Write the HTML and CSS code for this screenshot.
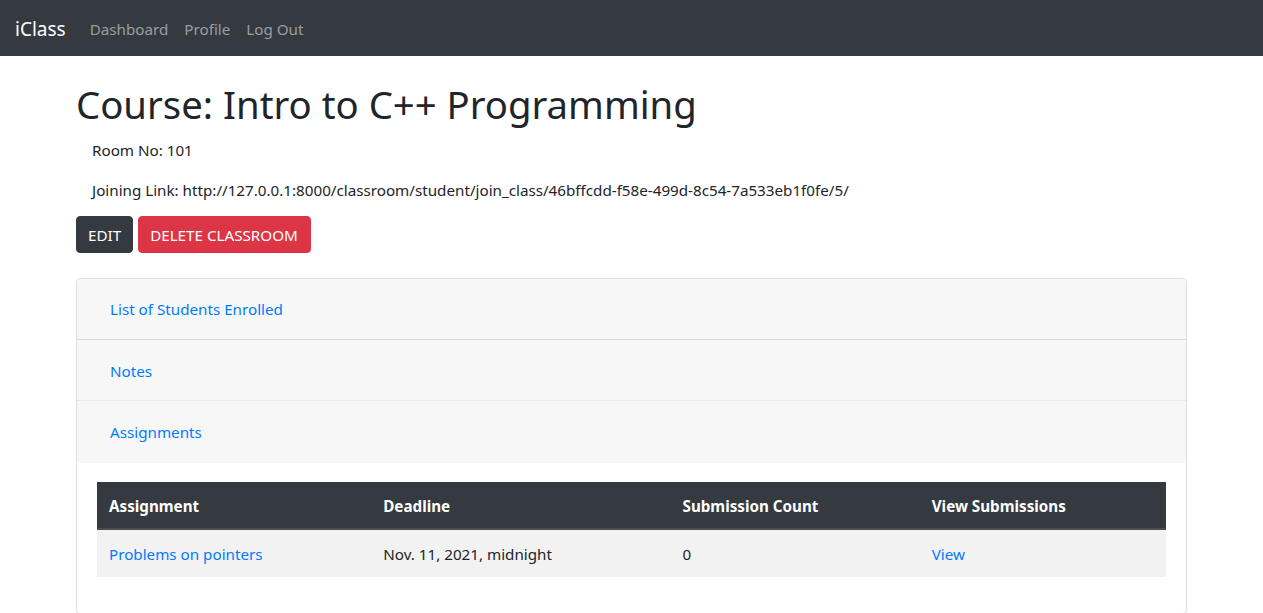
FILE: index.html
```html
<!DOCTYPE html>
<html lang="en">
<head>
<meta charset="utf-8">
<title>iClass</title>
<link rel="stylesheet" href="styles.css">
</head>
<body>
<nav class="navbar">
  <a class="brand" href="#">iClass</a>
  <ul class="nav-links">
    <li><a href="#">Dashboard</a></li>
    <li><a href="#">Profile</a></li>
    <li><a href="#">Log Out</a></li>
  </ul>
</nav>
<main class="container">
  <h1 class="title">Course: Intro to C++ Programming</h1>
  <div class="info">
    <p>Room No: 101</p>
    <p class="link-line">Joining Link: http://127.0.0.1:8000/classroom/student/join_class/46bffcdd-f58e-499d-8c54-7a533eb1f0fe/5/</p>
  </div>
  <div class="actions">
    <a class="btn btn-dark" href="#">EDIT</a>
    <a class="btn btn-danger" href="#">DELETE CLASSROOM</a>
  </div>
  <div class="accordion">
    <div class="card-header"><a class="btn-link" href="#">List of Students Enrolled</a></div>
    <div class="card-header"><a class="btn-link" href="#">Notes</a></div>
    <div class="card-header"><a class="btn-link" href="#">Assignments</a></div>
    <div class="card-body">
      <table class="table">
        <thead>
          <tr>
            <th class="col-a">Assignment</th>
            <th class="col-b">Deadline</th>
            <th class="col-c">Submission Count</th>
            <th class="col-d">View Submissions</th>
          </tr>
        </thead>
        <tbody>
          <tr>
            <td><a href="#">Problems on pointers</a></td>
            <td>Nov. 11, 2021, midnight</td>
            <td>0</td>
            <td><a href="#">View</a></td>
          </tr>
        </tbody>
      </table>
    </div>
  </div>
</main>
</body>
</html>
```
FILE: styles.css
```css
* { box-sizing: border-box; }
html, body { margin: 0; }
body {
  font-family: "Noto Sans", "Open Sans", sans-serif;
  font-size: 15.2px;
  line-height: 24px;
  color: #212529;
  background: #fff;
}
a { color: #007bff; text-decoration: none; }

.navbar {
  display: flex;
  align-items: center;
  height: 56px;
  padding: 8px 16px 7px 15px;
  background: #343a40;
}
.brand {
  color: #fff;
  font-size: 19px;
  line-height: 30px;
  margin-right: 16px;
}
.nav-links {
  display: flex;
  list-style: none;
  margin: 0;
  padding: 0;
}
.nav-links a {
  display: block;
  padding: 8px 8px;
  color: rgba(255,255,255,.5);
}

.container {
  width: 1111px;
  margin: 0 auto;
}
.title {
  font-size: 38.3px;
  line-height: 48px;
  font-weight: 400;
  margin: 24px 0 10px;
}
.info { padding: 0 16px; }
.info p { margin: 0 0 16px; }
.info .link-line { margin-bottom: 14px; }
.actions {
  display: flex;
  gap: 5px;
}
.btn {
  display: inline-block;
  padding: 6px 12px 5px;
  border: 1px solid transparent;
  border-radius: 4px;
  color: #fff;
  line-height: 24px;
}
.btn-dark { background: #343a40; border-color: #343a40; padding-left: 11px; padding-right: 11px; }
.btn-danger { background: #dc3545; border-color: #dc3545; padding-left: 11px; padding-right: 12px; }

.accordion {
  margin-top: 25px;
  border: 1px solid rgba(0,0,0,.125);
  border-radius: 4px;
  overflow: hidden;
}
.card-header {
  padding: 11px 20px 11px;
  background: #f7f7f7;
  border-bottom: 1px solid rgba(0,0,0,.125);
}
.card-header:nth-child(2) { border-bottom-color: rgba(0,0,0,.05); padding: 12px 20px 10px; }
.card-header:nth-child(3) { border-bottom: none; padding: 12px 20px 12px; }
.btn-link {
  display: inline-block;
  padding: 6px 12px;
  border: 1px solid transparent;
  line-height: 24px;
}
.card-body { padding: 19px 20px 20px; }
.table {
  width: 100%;
  border-collapse: collapse;
  margin-bottom: 16px;
  table-layout: fixed;
}
.table th, .table td {
  padding: 12px;
  text-align: left;
  vertical-align: top;
}
.table th {
  background: #343a40;
  color: #fff;
  font-weight: 700;
  border-bottom: 2px solid #454d55;
  padding-bottom: 10px;
}
.table tbody tr { background: #f2f2f2; }
.table td { border-top: 0; padding-top: 12px; padding-bottom: 11px; }
.col-a { width: 274px; }
.col-b { width: 299px; }
.col-c { width: 249px; }
.col-d { width: 246px; }
```
